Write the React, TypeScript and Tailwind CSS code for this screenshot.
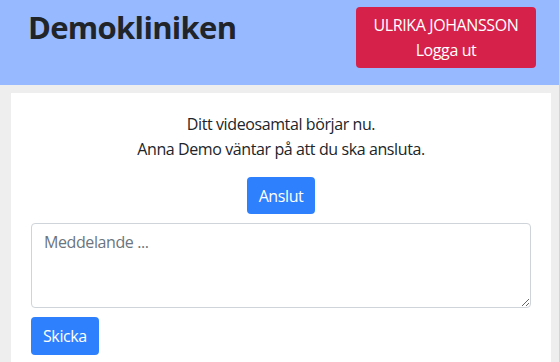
import React from 'react';

export default function App() {
  return (
    <div className="min-h-screen bg-[#eeeeee] font-['Open_Sans','Noto_Sans',sans-serif] text-[#212529] text-base tracking-[-0.4px]">
      <header className="h-[85px] bg-[#97b9ff] flex items-start justify-between pl-7 pr-[23px] pt-[7px]">
        <h1 className="text-[31px] font-bold leading-[40px] tracking-[-0.7px]">Demokliniken</h1>
        <button className="w-[180px] h-[61px] rounded bg-[#d6224a] text-white text-base leading-[25px] flex flex-col items-center justify-center">
          <span>ULRIKA JOHANSSON</span>
          <span>Logga ut</span>
        </button>
      </header>

      <main className="pl-[11px] pr-2 pt-2">
        <div className="bg-white px-5 pt-[19px] pb-6">
          <div className="text-center leading-[25px]">
            <p>Ditt videosamtal börjar nu.</p>
            <p>Anna Demo väntar på att du ska ansluta.</p>
          </div>
          <div className="flex justify-center mt-[15px]">
            <button className="h-[37px] px-3 rounded bg-[#2f80fd] text-white">Anslut</button>
          </div>
          <textarea
            placeholder="Meddelande ..."
            className="block w-full h-[85px] mt-[9px] px-3 py-1.5 leading-6 rounded border border-[#ced4da] placeholder:text-[#6c757d] outline-none"
          />
          <button className="mt-[9px] h-[38px] px-3 rounded bg-[#2f80fd] text-white">Skicka</button>
        </div>
      </main>
    </div>
  );
}
